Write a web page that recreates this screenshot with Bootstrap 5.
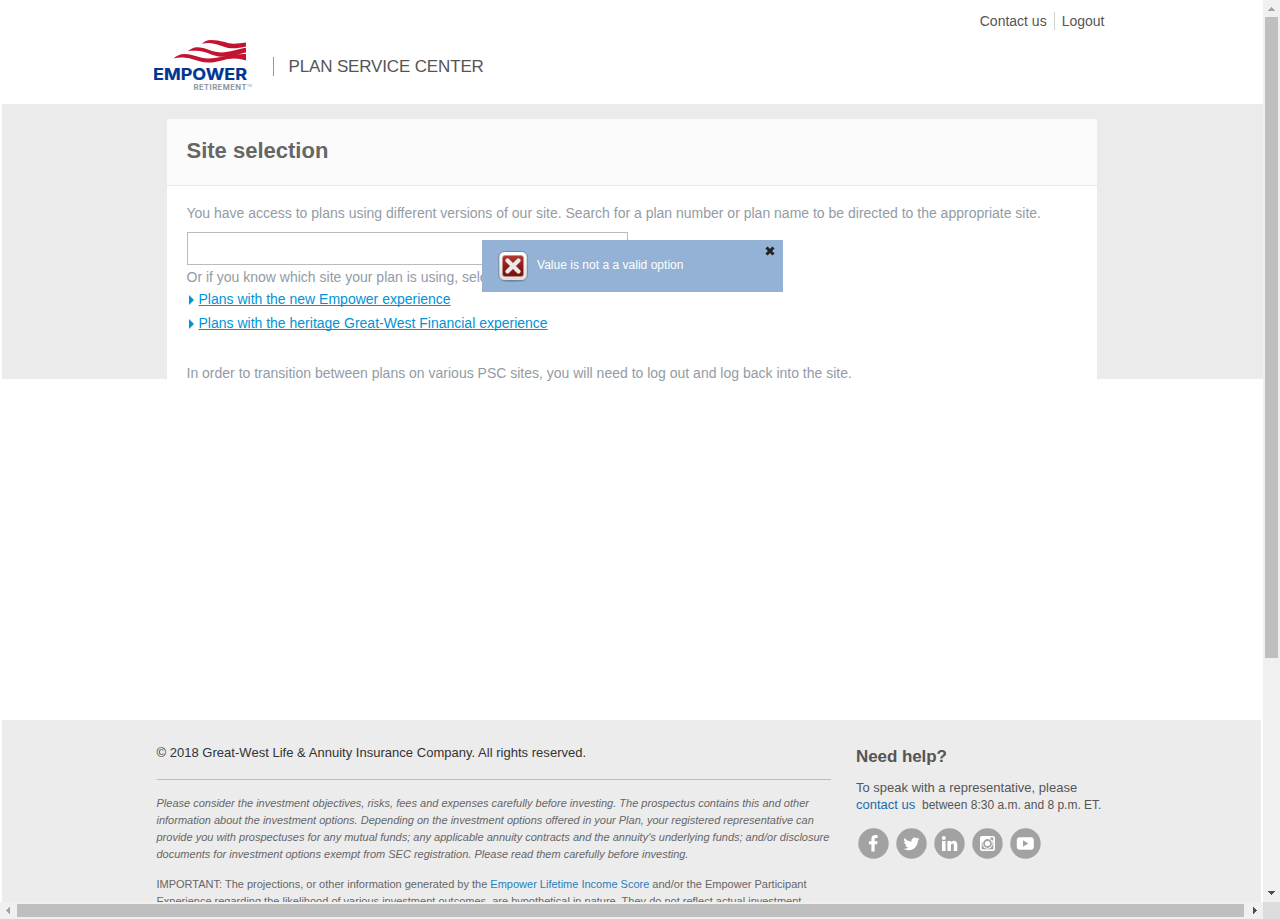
<!DOCTYPE html>
<html lang="en">
<head>
<meta charset="utf-8">
<meta name="viewport" content="width=device-width, initial-scale=1">
<title>Plan Service Center</title>
<link href="https://cdn.jsdelivr.net/npm/bootstrap@5.3.0/dist/css/bootstrap.min.css" rel="stylesheet">
<style>
body{font-family:"Liberation Sans",Arial,sans-serif;font-size:14px;line-height:17px;color:#555;background:#fff;overflow:hidden}
.window{display:grid;grid-template:902px 17px/1263px 17px;width:1280px;height:919px}
.viewport{padding-left:2px}
.site-header{height:104px;padding-left:152px}
.site-logo{width:98px;height:52px;margin-top:39px}
.site-name{font-size:17px;line-height:20px;margin:57px 0 0 21px;padding-left:14.500px;border-left:1px solid #999;height:19px;letter-spacing:-.15px}
.util-nav{margin:12px 158.500px 0 auto}
.util-nav a{color:#555;line-height:18px;height:18px}
.util-nav a+a{border-left:1px solid #d3d3c9;margin-left:7px;padding-left:7px}
.band{background:#ebebeb;height:275px;padding:15px 0 0 165px}
.panel{width:930px;height:260px;background:#fff;color:#939ba5}
.panel-head{height:67px;background:#fbfbfb;border-bottom:1px solid #ebebeb;padding:19px 19.500px}
.panel-head h1{font-size:22px;line-height:26px;font-weight:700;color:#666;margin:0}
.panel-main{padding:19px 19.500px 0}
.plan-search{width:441px;height:33px;border:1px solid #bbb;border-radius:0;margin:10px 0 4px .5px;padding:4px}
.plan-link{color:#0093d6;height:17px;margin-top:5px}
.plan-link+.plan-link{margin-top:7px}
.plan-link svg{width:5px;height:10px;margin:1px 4.500px 0 2.500px}
.plan-link a{color:#0093d6;text-decoration:underline;text-underline-offset:1px;text-decoration-thickness:1px;text-decoration-skip-ink:none}
.transition-note{margin-top:33px}
.notice{left:482px;top:240px;width:301px;height:52px;background:#93b2d5;color:#fff;font-size:12px}
.spacer{height:341px}
.site-footer{width:1259px;height:182px;background:#ececec;padding-left:154.500px}
.legal{width:674.500px;font-size:11px;color:#666;padding-top:24px}
.copyright{font-size:13px;letter-spacing:.02px;color:#333;padding-bottom:18px;border-bottom:1px solid #bbb;margin-bottom:15px}
.important{margin-top:13px}
.legal a{color:#1f7fbf}
.help{margin-left:25px;padding-top:27px;font-size:13px}
.help h2{font-size:17px;line-height:20px;font-weight:700;margin:0 0 12px;color:#555;letter-spacing:-.08px}
.help a{color:#1b6bab}
.hours{font-size:12px;margin-left:-.5px}
.social{margin:14px 0 0 2px;gap:7px}
.social svg{width:31px;height:31px}
.vbar,.hbar{background:#f0f0f0}
.vthumb,.hthumb{background:#bfbfbf}
.vthumb{width:13px;height:641px}
.hthumb{width:1227px;height:13px}
.sqr{width:17px;height:17px;display:block}
.gripper{background:#dcdcdc}
.nw{white-space:nowrap}
.notice-icon{margin:10px 0 0 15px}
.notice-text{margin:17px 0 0 8px;letter-spacing:.02px}
.notice-close{margin:6px 8px 0 0}
</style>
</head>
<body>
<div class="window">
<div class="viewport overflow-hidden">
  <header class="site-header d-flex align-items-start">
    <svg class="site-logo" viewBox="0 0 98 52">
      <g fill="#c41230">
        <path d="M48 4.800C50.500 2.500 53 .9 57 .9 67 .9 73 4.600 80 4.700 84 4.700 88 4.200 92 3.600V7.400C87 8.700 82 9.500 77 9.200 69 8.600 65 5 57 4.200 54 4 51 4.100 48 4.800Z"/>
        <path d="M33.700 12.300C36.500 10 39.500 8.300 43 8.300 52 8.300 57 13.300 67 13.400 76 13.400 84 9.900 92 8.800V13.400C85 14.600 77 18.100 68 17.800 58 17.400 54 12.800 45 12 41 11.700 37 11.600 33.700 12.300Z"/>
        <path d="M19.400 19.400C23 16.800 26 15.100 30.500 15.100 40 15.200 45 19.500 54 19.600 66 19.600 76 14.700 92 15.100V21.600C86 19.300 80 18.900 74 20.100 67 21.500 62 23.700 54 23.600 44 23.300 40 19.100 31 18.700 27 18.500 23 18.600 19.400 19.400Z"/>
      </g>
      <text x="-1" y="41" font-family="Inter,sans-serif" font-size="16.200" font-weight="700" fill="#003591" stroke="#003591" stroke-width=".2" textLength="94" lengthAdjust="spacingAndGlyphs">EMPOWER</text>
      <text x="39.500" y="51" font-family="Inter,sans-serif" font-size="7.600" font-weight="500" fill="#83909c" stroke="#83909c" stroke-width=".2" textLength="53" lengthAdjust="spacing">RETIREMENT</text>
      <text x="93" y="48" font-family="Inter,sans-serif" font-size="3" fill="#83909c">TM</text>
    </svg>
    <div class="site-name nw">PLAN SERVICE CENTER</div>
    <nav class="util-nav d-flex nw"><a class="text-decoration-none" href="#">Contact us</a><a class="text-decoration-none" href="#">Logout</a></nav>
  </header>
  <main>
    <section class="band">
      <div class="panel">
        <div class="panel-head"><h1>Site selection</h1></div>
        <div class="panel-main">
          <div class="nw">You have access to plans using different versions of our site. Search for a plan number or plan name to be directed to the appropriate site.</div>
          <input class="plan-search d-block" type="text" aria-label="Plan">
          <div class="nw">Or if you know which site your plan is using, select it below.</div>
          <div class="plan-link nw d-flex align-items-center"><svg viewBox="0 0 5 10"><path d="M0 0 5 5 0 10Z" fill="#0093d6"/></svg><a href="#">Plans with the new Empower experience</a></div>
          <div class="plan-link nw d-flex align-items-center"><svg viewBox="0 0 5 10"><path d="M0 0 5 5 0 10Z" fill="#0093d6"/></svg><a href="#">Plans with the heritage Great-West Financial experience</a></div>
          <div class="nw transition-note">In order to transition between plans on various PSC sites, you will need to log out and log back into the site.</div>
        </div>
      </div>
    </section>
    <div class="spacer"></div>
  </main>
  <footer class="site-footer d-flex">
    <div class="legal">
      <div class="copyright nw">© 2018 Great-West Life &amp; Annuity Insurance Company. All rights reserved.</div>
      <div class="fst-italic nw">Please consider the investment objectives, risks, fees and expenses carefully before investing. The prospectus contains this and other<br>information about the investment options. Depending on the investment options offered in your Plan, your registered representative can<br>provide you with prospectuses for any mutual funds; any applicable annuity contracts and the annuity's underlying funds; and/or disclosure<br>documents for investment options exempt from SEC registration. Please read them carefully before investing.</div>
      <div class="nw important">IMPORTANT: The projections, or other information generated by the <a class="text-decoration-none" href="#">Empower Lifetime Income Score</a> and/or the Empower Participant<br>Experience regarding the likelihood of various investment outcomes, are hypothetical in nature. They do not reflect actual investment</div>
    </div>
    <div class="help">
      <h2>Need help?</h2>
      <div class="nw">To speak with a representative, please</div>
      <div class="nw"><a class="text-decoration-none" href="#">contact us</a>&nbsp; <span class="hours">between 8:30 a.m. and 8 p.m. ET.</span></div>
      <div class="social d-flex">
        <svg viewBox="0 0 31 31"><circle cx="15.500" cy="15.500" r="15.200" fill="#a2a2a2"/><path fill="#fff" d="M13.400 23.500v-7.300h-2.500v-3h2.500v-2.100c0-2.600 1.500-4 3.900-4 1 0 2 .1 2.300.2V10h-1.500c-1.200 0-1.500.6-1.500 1.500v1.700h2.900l-.4 3h-2.500v7.300Z"/></svg>
        <svg viewBox="0 0 31 31"><circle cx="15.500" cy="15.500" r="15.200" fill="#a2a2a2"/><path fill="#fff" transform="translate(7.500 7.800)" d="M5 14.500c6 0 9.300-5 9.300-9.300v-.4A6.700 6.700 0 0 0 16 3.100a6.500 6.500 0 0 1-1.900.5A3.300 3.300 0 0 0 15.500 1.800a6.600 6.600 0 0 1-2.100.8A3.300 3.300 0 0 0 7.900 5.600 9.300 9.300 0 0 1 1.100 2.100a3.300 3.300 0 0 0 1 4.400A3.200 3.200 0 0 1 .6 6.100a3.300 3.300 0 0 0 2.700 3.200 3.200 3.200 0 0 1-1.500.1 3.300 3.300 0 0 0 3.100 2.300A6.600 6.600 0 0 1 0 13a9.300 9.300 0 0 0 5 1.500"/></svg>
        <svg viewBox="0 0 31 31"><circle cx="15.500" cy="15.500" r="15.200" fill="#a2a2a2"/><g fill="#fff"><circle cx="9.800" cy="10" r="2"/><path d="M8 13h3.600V23H8ZM13.400 13h3.500v1.400c.6-.9 1.500-1.700 2.900-1.700 2.700 0 3.500 1.800 3.500 4.400V23h-3.500v-5.300c0-1.200-.2-2.200-1.300-2.200s-1.600 1-1.600 2.200V23h-3.500Z"/></g></svg>
        <svg viewBox="0 0 31 31"><circle cx="15.500" cy="15.500" r="15.200" fill="#a2a2a2"/><rect x="8" y="8" width="15" height="15" rx="2" fill="#fff"/><rect x="18.300" y="9.500" width="3" height="3" fill="#a2a2a2"/><path fill="#a2a2a2" d="M9.700 14h11.600v7.300H9.700Z"/><circle cx="15.500" cy="15.500" r="5.200" fill="#fff"/><circle cx="15.500" cy="15.500" r="3.500" fill="#fff" stroke="#a2a2a2" stroke-width="1.800"/></svg>
        <svg viewBox="0 0 31 31"><circle cx="15.500" cy="15.500" r="15.200" fill="#a2a2a2"/><rect x="6.800" y="9.300" width="17" height="12.500" rx="3" fill="#fff"/><path d="M13 12.300v6.400l5.300-3.200Z" fill="#a2a2a2"/></svg>
      </div>
    </div>
  </footer>
</div>
<div class="vbar d-flex flex-column align-items-center">
  <svg class="sqr" viewBox="0 0 17 17" shape-rendering="crispEdges"><path d="m5 11 3.500-4 3.500 4Z" fill="#a3a3a3"/></svg>
  <div class="vthumb"></div>
  <svg class="sqr mt-auto" viewBox="0 0 17 17" shape-rendering="crispEdges"><path d="M5 6h7l-3.500 4Z" fill="#505050"/></svg>
</div>
<div class="hbar d-flex align-items-center">
  <svg class="sqr" viewBox="0 0 17 17" shape-rendering="crispEdges"><path d="M10 5v7L6 8.500Z" fill="#a3a3a3"/></svg>
  <div class="hthumb"></div>
  <svg class="sqr ms-auto" viewBox="0 0 17 17" shape-rendering="crispEdges"><path d="M7 5v7l4-3.500Z" fill="#505050"/></svg>
</div>
<div class="gripper"></div>
</div>
<div class="notice position-absolute d-flex align-items-start" role="alert">
  <svg class="notice-icon" width="32" height="34" viewBox="0 0 32 34">
    <defs><linearGradient id="fr" x2="0" y2="1"><stop stop-color="#fff"/><stop offset="1" stop-color="#dedede"/></linearGradient><linearGradient id="rd" x2="0" y2="1"><stop stop-color="#b33a36"/><stop offset=".5" stop-color="#8e1b16"/><stop offset="1" stop-color="#7b0f08"/></linearGradient></defs>
    <ellipse cx="16" cy="30.500" rx="12" ry="1.500" fill="#69819c" opacity=".7"/>
    <rect x="1.800" y="1.500" width="28.500" height="29" rx="5.500" fill="url(#fr)" stroke="#71879f"/>
    <rect x="5.500" y="5.500" width="21" height="21" rx="2.500" fill="url(#rd)" stroke="#b9928f" stroke-width=".6"/>
    <path d="m10.500 10.500 11 11M21.500 10.500 10.500 21.500" stroke="#e9e9e9" stroke-width="4.200" stroke-linecap="round"/>
  </svg>
  <span class="nw notice-text">Value is not a a valid option</span>
  <svg class="notice-close ms-auto" width="10" height="10" viewBox="0 0 10 10"><path d="M1.500 1.500 8.500 8.500M8.500 1.500 1.500 8.500" stroke="#222" stroke-width="3"/></svg>
</div>
<script src="https://cdn.jsdelivr.net/npm/bootstrap@5.3.0/dist/js/bootstrap.bundle.min.js"></script>
</body>
</html>
